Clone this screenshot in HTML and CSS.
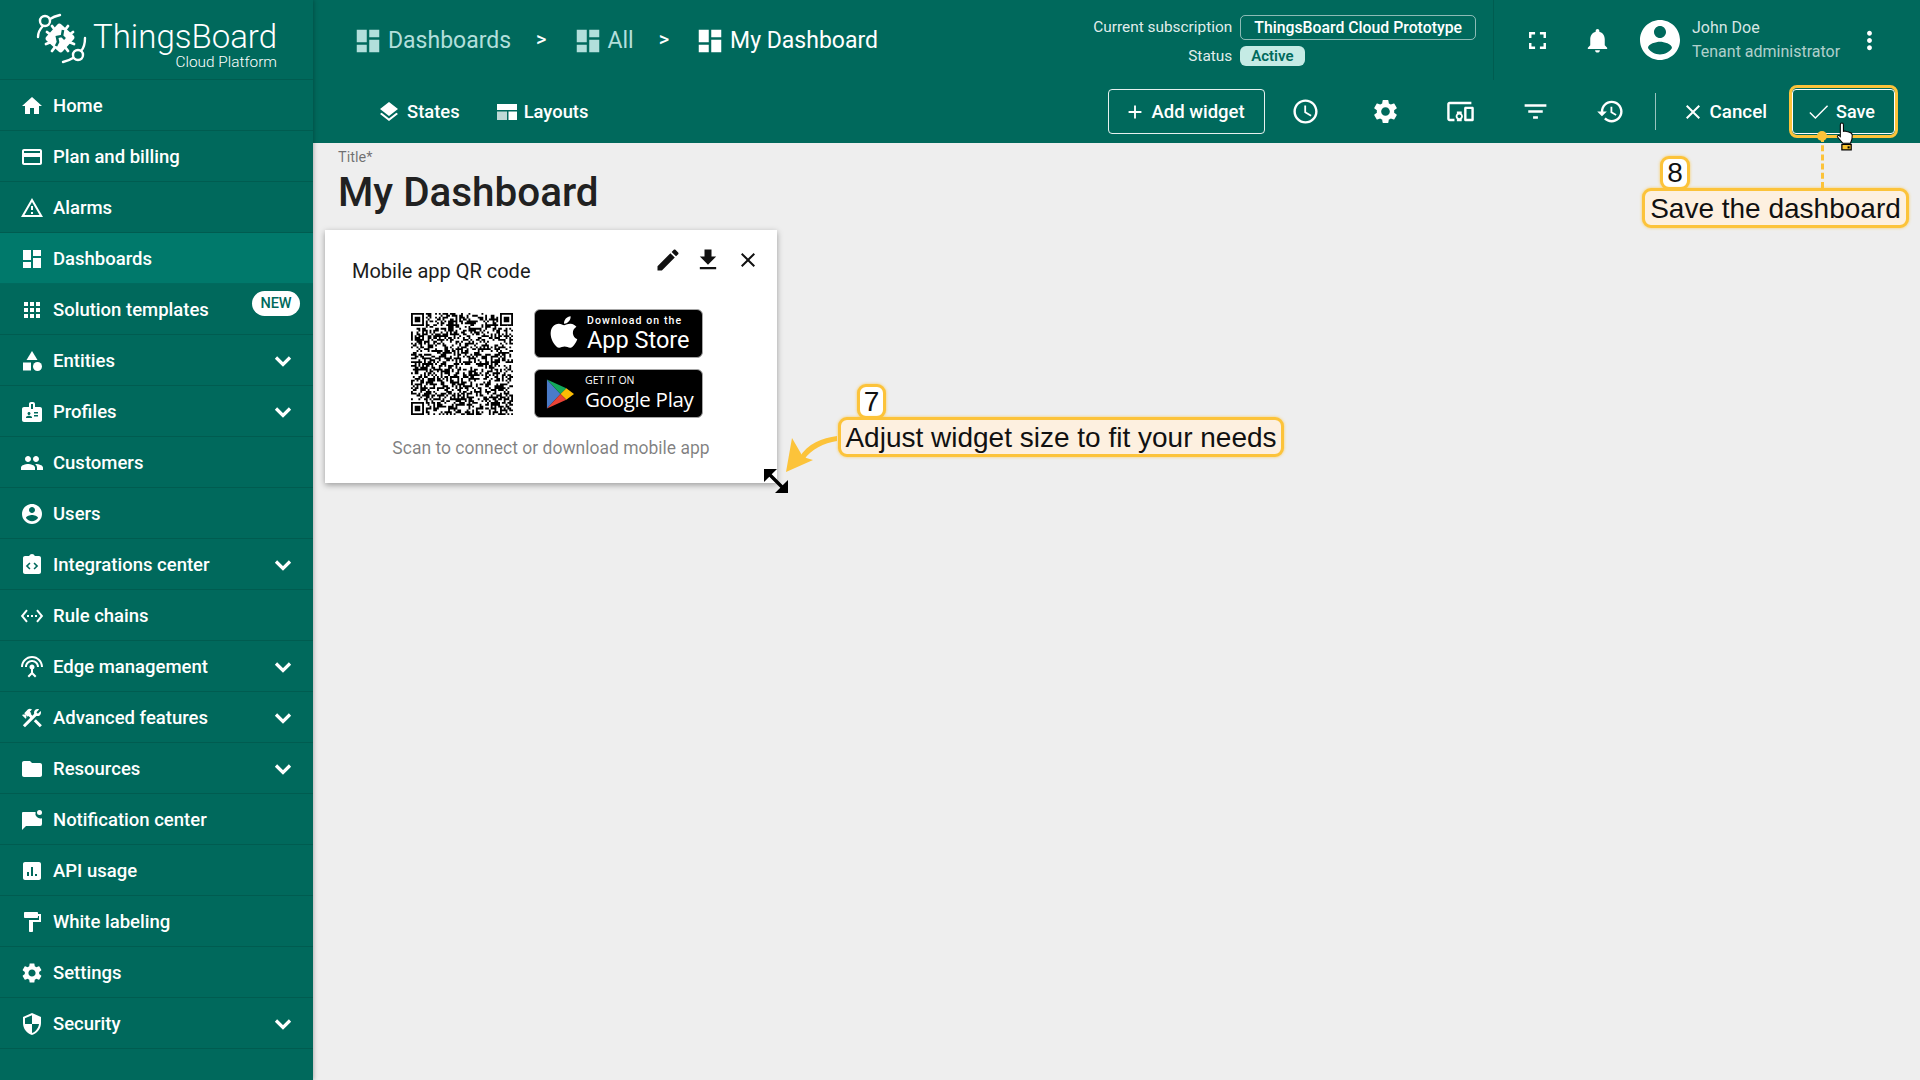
FILE: index.html

```html
<!DOCTYPE html>
<html lang="en">
<head>
  <meta charset="UTF-8">
  <title>ThingsBoard | My Dashboard</title>
  <link rel="stylesheet" href="styles.css">
</head>
<body>
  <svg class="defs" width="0" height="0">
    <symbol id="i-home" viewBox="0 0 24 24"><path d="M10 20v-6h4v6h5v-8h3L12 3 2 12h3v8z"/></symbol>
    <symbol id="i-card" viewBox="0 0 24 24"><path d="M20 4H4c-1.11 0-1.99.89-1.99 2L2 18c0 1.11.89 2 2 2h16c1.11 0 2-.89 2-2V6c0-1.11-.89-2-2-2zm0 14H4v-6h16v6zm0-10H4V6h16v2z"/></symbol>
    <symbol id="i-alarm" viewBox="0 0 24 24"><path d="M12 5.99L19.53 19H4.47L12 5.99M12 2L1 21h22L12 2zm1 14h-2v2h2v-2zm0-6h-2v4h2v-4z"/></symbol>
    <symbol id="i-dash" viewBox="0 0 24 24"><path d="M3 13h8V3H3v10zm0 8h8v-6H3v6zm10 0h8V11h-8v10zm0-18v6h8V3h-8z"/></symbol>
    <symbol id="i-apps" viewBox="0 0 24 24"><path d="M4 8h4V4H4v4zm6 12h4v-4h-4v4zm-6 0h4v-4H4v4zm0-6h4v-4H4v4zm6 0h4v-4h-4v4zm6-10v4h4V4h-4zm-6 4h4V4h-4v4zm6 6h4v-4h-4v4zm0 6h4v-4h-4v4z"/></symbol>
    <symbol id="i-entities" viewBox="0 0 24 24"><path d="M12 2l-5.5 9h11z"/><circle cx="17.5" cy="17.5" r="4.5"/><path d="M3 13.5h8v8H3z"/></symbol>
    <symbol id="i-profiles" viewBox="0 0 24 24"><path d="M20 7h-5V4c0-1.1-.9-2-2-2h-2c-1.1 0-2 .9-2 2v3H4c-1.1 0-2 .9-2 2v11c0 1.1.9 2 2 2h16c1.1 0 2-.9 2-2V9c0-1.1-.9-2-2-2zM9 12c.83 0 1.5.67 1.5 1.5S9.83 15 9 15s-1.5-.67-1.5-1.5S8.17 12 9 12zm3 6H6v-.75c0-1 2-1.5 3-1.5s3 .5 3 1.5V18zm1-9h-2V4h2v5zm5 7.5h-4V15h4v1.5zm0-3h-4V12h4v1.5z"/></symbol>
    <symbol id="i-people" viewBox="0 0 24 24"><path d="M16 11c1.66 0 2.99-1.34 2.99-3S17.66 5 16 5c-1.66 0-3 1.34-3 3s1.34 3 3 3zm-8 0c1.66 0 2.99-1.34 2.99-3S9.66 5 8 5C6.34 5 5 6.34 5 8s1.34 3 3 3zm0 2c-2.33 0-7 1.17-7 3.5V19h14v-2.5c0-2.33-4.67-3.5-7-3.5zm8 0c-.29 0-.62.02-.97.05 1.16.84 1.97 1.97 1.97 3.45V19h6v-2.5c0-2.33-4.67-3.5-7-3.5z"/></symbol>
    <symbol id="i-account" viewBox="0 0 24 24"><path d="M12 2C6.48 2 2 6.48 2 12s4.48 10 10 10 10-4.48 10-10S17.52 2 12 2zm0 3c1.66 0 3 1.34 3 3s-1.34 3-3 3-3-1.34-3-3 1.34-3 3-3zm0 14.2c-2.5 0-4.71-1.28-6-3.22.03-1.99 4-3.08 6-3.08 1.99 0 5.97 1.09 6 3.08-1.29 1.94-3.5 3.22-6 3.22z"/></symbol>
    <symbol id="i-integr" viewBox="0 0 24 24"><path fill-rule="evenodd" d="M19 3h-4.18C14.4 1.84 13.3 1 12 1s-2.4.84-2.82 2H5c-1.1 0-2 .9-2 2v14c0 1.1.9 2 2 2h14c1.100 0 2-.9 2-2V5c0-1.100-.9-2-2-2zM10.500 15.500l-1.100 1.100L5.800 13l3.600-3.600 1.100 1.100L8 13zm3 0l1.100 1.100L18.200 13l-3.600-3.600-1.100 1.100L16 13z"/></symbol>
    <symbol id="i-rule" viewBox="0 0 24 24"><path d="M7.77 6.76L6.23 5.48.82 12l5.41 6.52 1.54-1.28L3.42 12l4.35-5.24zM7 13h2v-2H7v2zm10-2h-2v2h2v-2zm-6 2h2v-2h-2v2zm6.77-7.52l-1.54 1.28L20.58 12l-4.35 5.24 1.54 1.28L23.18 12l-5.41-6.52z"/></symbol>
    <symbol id="i-edge" viewBox="0 0 24 24"><path d="M12 5c-3.87 0-7 3.13-7 7h2c0-2.76 2.24-5 5-5s5 2.24 5 5h2c0-3.87-3.13-7-7-7zm1 9.29c.88-.39 1.5-1.26 1.5-2.29 0-1.38-1.12-2.5-2.5-2.5S9.5 10.62 9.5 12c0 1.02.62 1.9 1.5 2.29v3.3L7.59 21 9 22.41l3-3 3 3L16.41 21 13 17.59v-3.3zM12 1C5.93 1 1 5.93 1 12h2c0-4.97 4.03-9 9-9s9 4.03 9 9h2c0-6.07-4.93-11-11-11z"/></symbol>
    <symbol id="i-tools" viewBox="0 0 24 24"><path d="M13.78 15.3L19.78 21.3L21.89 19.14L15.89 13.14L13.78 15.3M17.5 10.1C17.11 10.1 16.69 10.05 16.36 9.91L4.97 21.25L2.86 19.14L10.27 11.74L8.5 9.96L7.78 10.66L6.33 9.25V12.11L5.63 12.81L2.11 9.25L2.81 8.55H5.62L4.22 7.14L7.78 3.58C8.95 2.41 10.83 2.41 12 3.58L9.89 5.74L11.3 7.14L10.59 7.85L12.38 9.63L14.2 7.75C14.06 7.42 14 7 14 6.63C14 4.66 15.56 3.11 17.5 3.11C18.09 3.11 18.61 3.25 19.08 3.53L16.41 6.2L17.91 7.7L20.58 5.03C20.86 5.5 21 6 21 6.63C21 8.55 19.45 10.1 17.5 10.1Z"/></symbol>
    <symbol id="i-folder" viewBox="0 0 24 24"><path d="M10 4H4c-1.1 0-1.99.9-1.99 2L2 18c0 1.1.9 2 2 2h16c1.1 0 2-.9 2-2V8c0-1.1-.9-2-2-2h-8l-2-2z"/></symbol>
    <symbol id="i-notif" viewBox="0 0 24 24"><path d="M2 5a1 1 0 0 1 1-1h12.6a5 5 0 0 0 6.4 6.2V16a2 2 0 0 1-2 2H6l-4 4z"/><circle cx="19.5" cy="4.5" r="2.5"/></symbol>
    <symbol id="i-api" viewBox="0 0 24 24"><path d="M19 3H5c-1.1 0-2 .9-2 2v14c0 1.1.9 2 2 2h14c1.1 0 2-.9 2-2V5c0-1.1-.9-2-2-2zM9 17H7v-4h2v4zm4 0h-2V8h2v9zm4 0h-2v-2h2v2z"/></symbol>
    <symbol id="i-paint" viewBox="0 0 24 24"><path d="M18 4V3c0-.55-.45-1-1-1H5c-.55 0-1 .45-1 1v4c0 .55.45 1 1 1h12c.55 0 1-.45 1-1V6h1v4H9v11c0 .55.45 1 1 1h2c.55 0 1-.45 1-1v-9h8V4h-3z"/></symbol>
    <symbol id="i-gear" viewBox="0 0 24 24"><path d="M19.14 12.94c.04-.3.06-.61.06-.94 0-.32-.02-.64-.07-.94l2.03-1.58c.18-.14.23-.41.12-.61l-1.92-3.32c-.12-.22-.37-.29-.59-.22l-2.39.96c-.5-.38-1.03-.7-1.62-.94l-.36-2.54c-.04-.24-.24-.41-.48-.41h-3.84c-.24 0-.43.17-.47.41l-.36 2.54c-.59.24-1.13.57-1.62.94l-2.39-.96c-.22-.08-.47 0-.59.22L2.74 8.87c-.12.21-.08.47.12.61l2.03 1.58c-.05.3-.09.63-.09.94s.02.64.07.94l-2.03 1.58c-.18.14-.23.41-.12.61l1.92 3.32c.12.22.37.29.59.22l2.39-.96c.5.38 1.03.7 1.62.94l.36 2.54c.05.24.24.41.48.41h3.84c.24 0 .44-.17.47-.41l.36-2.54c.59-.24 1.13-.56 1.62-.94l2.39.96c.22.08.47 0 .59-.22l1.92-3.32c.12-.22.07-.47-.12-.61l-2.01-1.58zM12 15.6c-1.98 0-3.6-1.62-3.6-3.6s1.62-3.6 3.6-3.6 3.6 1.62 3.6 3.6-1.62 3.6-3.6 3.6z"/></symbol>
    <symbol id="i-shield" viewBox="0 0 24 24"><path d="M12 1L3 5v6c0 5.55 3.84 10.74 9 12 5.16-1.26 9-6.45 9-12V5l-9-4zm0 10.99h7c-.53 4.12-3.28 7.79-7 8.94V12H5V6.3l7-3.11v8.8z"/></symbol>
    <symbol id="i-more" viewBox="0 0 24 24"><path d="M12 8c1.1 0 2-.9 2-2s-.9-2-2-2-2 .9-2 2 .9 2 2 2zm0 2c-1.1 0-2 .9-2 2s.9 2 2 2 2-.9 2-2-.9-2-2-2zm0 6c-1.1 0-2 .9-2 2s.9 2 2 2 2-.9 2-2-.9-2-2-2z"/></symbol>
    <symbol id="i-close" viewBox="0 0 24 24"><path d="M19 6.41L17.59 5 12 10.59 6.41 5 5 6.41 10.59 12 5 17.59 6.41 19 12 13.41 17.59 19 19 17.59 13.41 12z"/></symbol>
    <symbol id="i-chevron" viewBox="0 0 24 24"><path d="M5 8.5l7 7 7-7" fill="none" stroke="currentColor" stroke-width="3.2"/></symbol>
  </svg>

  <div class="app">
    <nav class="sidebar">
      <div class="brand">
        <svg class="brand-logo" viewBox="0 0 60 60">
          <g fill="none" stroke="#fff" stroke-width="2.4" stroke-linecap="round">
            <circle cx="15" cy="13" r="5"/>
            <circle cx="48" cy="47" r="5"/>
            <path d="M20 11c3-2 6-3 10-4M13 18c-3 3-5 7-5 11M43 50c-3 2-6 3-10 4M51 43c3-3 4-8 4-13"/>
            <path d="M22 18l3 4M38 18l-3 4M17 24l4 3M43 24l-4 3M16 36l5-2M44 36l-5-2M22 43l3-4M38 43l-3-4" stroke-width="2.8"/>
          </g>
          <rect x="19" y="19" width="22" height="22" rx="3" fill="#fff" transform="rotate(42 30 30)"/>
          <path d="M33 22l-1 6-5 1 1 5-2 4M32 28l3 3" fill="none" stroke="#00695c" stroke-width="2.6"/>
        </svg>
        <div class="brand-text">
          <span class="brand-name">ThingsBoard</span>
          <span class="brand-sub">Cloud Platform</span>
        </div>
      </div>
      <a class="nav-item"><svg class="nav-icon"><use href="#i-home"/></svg><span>Home</span></a>
      <a class="nav-item"><svg class="nav-icon"><use href="#i-card"/></svg><span>Plan and billing</span></a>
      <a class="nav-item"><svg class="nav-icon"><use href="#i-alarm"/></svg><span>Alarms</span></a>
      <a class="nav-item active"><svg class="nav-icon"><use href="#i-dash"/></svg><span>Dashboards</span></a>
      <a class="nav-item"><svg class="nav-icon"><use href="#i-apps"/></svg><span>Solution templates</span><b class="new-badge">NEW</b></a>
      <a class="nav-item"><svg class="nav-icon"><use href="#i-entities"/></svg><span>Entities</span><svg class="nav-arrow"><use href="#i-chevron"/></svg></a>
      <a class="nav-item"><svg class="nav-icon"><use href="#i-profiles"/></svg><span>Profiles</span><svg class="nav-arrow"><use href="#i-chevron"/></svg></a>
      <a class="nav-item"><svg class="nav-icon"><use href="#i-people"/></svg><span>Customers</span></a>
      <a class="nav-item"><svg class="nav-icon"><use href="#i-account"/></svg><span>Users</span></a>
      <a class="nav-item"><svg class="nav-icon"><use href="#i-integr"/></svg><span>Integrations center</span><svg class="nav-arrow"><use href="#i-chevron"/></svg></a>
      <a class="nav-item"><svg class="nav-icon"><use href="#i-rule"/></svg><span>Rule chains</span></a>
      <a class="nav-item"><svg class="nav-icon"><use href="#i-edge"/></svg><span>Edge management</span><svg class="nav-arrow"><use href="#i-chevron"/></svg></a>
      <a class="nav-item"><svg class="nav-icon"><use href="#i-tools"/></svg><span>Advanced features</span><svg class="nav-arrow"><use href="#i-chevron"/></svg></a>
      <a class="nav-item"><svg class="nav-icon"><use href="#i-folder"/></svg><span>Resources</span><svg class="nav-arrow"><use href="#i-chevron"/></svg></a>
      <a class="nav-item"><svg class="nav-icon"><use href="#i-notif"/></svg><span>Notification center</span></a>
      <a class="nav-item"><svg class="nav-icon"><use href="#i-api"/></svg><span>API usage</span></a>
      <a class="nav-item"><svg class="nav-icon"><use href="#i-paint"/></svg><span>White labeling</span></a>
      <a class="nav-item"><svg class="nav-icon"><use href="#i-gear"/></svg><span>Settings</span></a>
      <a class="nav-item"><svg class="nav-icon"><use href="#i-shield"/></svg><span>Security</span><svg class="nav-arrow"><use href="#i-chevron"/></svg></a>
    </nav>

    <main class="main">
      <header class="topbar">
        <div class="top-row">
          <div class="crumbs">
            <svg class="crumb-icon"><use href="#i-dash"/></svg><span class="crumb">Dashboards</span>
            <span class="crumb-sep">&gt;</span>
            <svg class="crumb-icon"><use href="#i-dash"/></svg><span class="crumb">All</span>
            <span class="crumb-sep">&gt;</span>
            <svg class="crumb-icon current"><use href="#i-dash"/></svg><span class="crumb current">My Dashboard</span>
          </div>
          <div class="subscription">
            <span class="sub-label">Current subscription</span><span class="sub-plan">ThingsBoard Cloud Prototype</span>
            <span class="sub-label">Status</span><span class="sub-status">Active</span>
          </div>
          <div class="user-area">
            <svg class="top-icon fullscreen" viewBox="0 0 24 24"><path d="M7 14H5v5h5v-2H7v-3zm-2-4h2V7h3V5H5v5zm12 7h-3v2h5v-5h-2v3zM14 5v2h3v3h2V5h-5z"/></svg>
            <svg class="top-icon bell" viewBox="0 0 24 24"><path d="M12 22c1.1 0 2-.9 2-2h-4c0 1.1.89 2 2 2zm6-6v-5c0-3.07-1.64-5.64-4.5-6.32V4c0-.83-.67-1.5-1.5-1.5s-1.5.67-1.5 1.5v.68C7.63 5.36 6 7.92 6 11v5l-2 2v1h16v-1l-2-2z"/></svg>
            <svg class="avatar"><use href="#i-account"/></svg>
            <div class="user-text">
              <span class="user-name">John Doe</span>
              <span class="user-role">Tenant administrator</span>
            </div>
            <svg class="top-icon more"><use href="#i-more"/></svg>
          </div>
        </div>
        <div class="action-row">
          <a class="tab-btn states">
            <svg viewBox="0 0 24 24"><path d="M11.99 18.54l-7.37-5.73L3 14.07l9 7 9-7-1.63-1.27-7.38 5.74zM12 16l7.36-5.73L21 9l-9-7-9 7 1.63 1.27L12 16z"/></svg>States
          </a>
          <a class="tab-btn layouts">
            <svg viewBox="0 0 24 24"><path d="M2 4h20v6H2z"/><path d="M2 11.5h10V20H2z" opacity=".75"/><path d="M13.5 11.5H22V20h-8.5z"/></svg>Layouts
          </a>
          <a class="add-btn">
            <svg viewBox="0 0 24 24"><path d="M19 13h-6v6h-2v-6H5v-2h6V5h2v6h6v2z"/></svg>Add widget
          </a>
          <svg class="tool-icon first" viewBox="0 0 24 24"><path d="M11.99 2C6.47 2 2 6.48 2 12s4.47 10 9.99 10C17.52 22 22 17.52 22 12S17.52 2 11.99 2zM12 20c-4.42 0-8-3.58-8-8s3.58-8 8-8 8 3.58 8 8-3.58 8-8 8zm.5-13H11v6l5.25 3.15.75-1.23-4.5-2.67z"/></svg>
          <svg class="tool-icon second"><use href="#i-gear"/></svg>
          <svg class="tool-icon" viewBox="0 0 24 24"><path d="M3 6h18V4H3c-1.1 0-2 .9-2 2v12c0 1.1.9 2 2 2h4v-2H3V6zm10 6H9v1.78c-.61.55-1 1.33-1 2.22s.39 1.67 1 2.22V20h4v-1.78c.61-.55 1-1.34 1-2.22s-.39-1.67-1-2.22V12zm-2 5.5c-.83 0-1.5-.67-1.5-1.5s.67-1.5 1.5-1.5 1.5.67 1.5 1.5-.67 1.5-1.5 1.5zM22 8h-6c-.5 0-1 .5-1 1v10c0 .5.5 1 1 1h6c.5 0 1-.5 1-1V9c0-.5-.5-1-1-1zm-1 10h-4v-8h4v8z"/></svg>
          <svg class="tool-icon" viewBox="0 0 24 24"><path d="M10 18h4v-2h-4v2zM3 6v2h18V6H3zm3 7h12v-2H6v2z"/></svg>
          <svg class="tool-icon" viewBox="0 0 24 24"><path d="M13 3c-4.97 0-9 4.03-9 9H1l3.89 3.89.07.14L9 12H6c0-3.87 3.13-7 7-7s7 3.13 7 7-3.13 7-7 7c-1.93 0-3.68-.79-4.94-2.06l-1.42 1.42C8.27 19.99 10.51 21 13 21c4.97 0 9-4.03 9-9s-4.03-9-9-9zm-1 5v5l4.28 2.54.72-1.21-3.5-2.08V8H12z"/></svg>
          <span class="tool-divider"></span>
          <a class="text-btn cancel"><svg><use href="#i-close"/></svg>Cancel</a>
          <a class="text-btn save">
            <svg viewBox="0 0 24 24"><path d="M9 17.2L4.2 12.4l-1 1L9 19.2 21.2 7l-1-1z"/></svg>Save
          </a>
        </div>
      </header>

      <section class="content">
        <div class="title-field">
          <label class="title-label">Title*</label>
          <h1 class="title-value">My Dashboard</h1>
        </div>
        <div class="canvas">
          <article class="widget">
            <div class="widget-head">
              <span class="widget-title">Mobile app QR code</span>
              <span class="widget-actions">
                <svg viewBox="0 0 24 24"><path d="M3 17.25V21h3.75L17.81 9.94l-3.75-3.75L3 17.25zM20.71 7.04c.39-.39.39-1.02 0-1.41l-2.34-2.34c-.39-.39-1.02-.39-1.41 0l-1.83 1.83 3.75 3.75 1.83-1.83z"/></svg>
                <svg viewBox="0 0 24 24"><path d="M19 9h-4V3H9v6H5l7 7 7-7zM5 18v2h14v-2H5z"/></svg>
                <svg class="widget-close"><use href="#i-close"/></svg>
              </span>
            </div>
            <div class="qr-row">
              <svg id="qr" class="qr" viewBox="0 0 55 55"></svg>
              <div class="stores">
                <div class="store-badge">
                  <svg class="apple" viewBox="0 0 24 24"><path d="M17.05 20.28c-.98.95-2.05.8-3.08.35-1.09-.46-2.09-.48-3.24 0-1.44.62-2.2.44-3.06-.35C2.79 15.25 3.51 7.59 9.05 7.31c1.35.07 2.29.74 3.08.8 1.18-.24 2.31-.93 3.57-.84 1.51.12 2.65.72 3.4 1.8-3.12 1.87-2.38 5.98.48 7.13-.57 1.5-1.31 2.99-2.54 4.09zM12.03 7.25c-.15-2.23 1.66-4.07 3.74-4.25.29 2.58-2.34 4.5-3.74 4.25z"/></svg>
                  <div class="store-text">
                    <span class="store-small apple-small">Download on the</span>
                    <span class="store-big apple-big">App Store</span>
                  </div>
                </div>
                <div class="store-badge">
                  <svg class="play" viewBox="0 0 30 32">
                    <path d="M1 1v30l14-15z" fill="#4a7bc8"/>
                    <path d="M1 1l14 15 6-6z" fill="#12a85b"/>
                    <path d="M21 10l-6 6 6 6 8-6z" fill="#fbbc04"/>
                    <path d="M1 31l14-15 6 6z" fill="#ea4335"/>
                  </svg>
                  <div class="store-text">
                    <span class="store-small">GET IT ON</span>
                    <span class="store-big google">Google Play</span>
                  </div>
                </div>
              </div>
            </div>
            <p class="widget-caption">Scan to connect or download mobile app</p>
          </article>
        </div>
      </section>
    </main>
  </div>

  <!-- tour overlay -->
  <div class="save-ring"></div>
  <div class="save-line"></div>
  <div class="save-dot"></div>
  <svg class="hand" viewBox="0 0 18 28">
    <path d="M5.500 1c1 0 1.500.7 1.500 1.600V9l1.500-.3 1.400.4 1.400.3 1.500.5c1.500.4 2.700 1.200 2.700 2.800l-.3 4-1.400 3.800H6.500L1.300 14.500c-.7-1.100.8-2.200 1.900-1.100l.8.700V2.600C4 1.700 4.600 1 5.500 1z" fill="#fff" stroke="#000" stroke-width="1"/>
    <path d="M5.500 21.500h9v5.500h-9z" fill="#f7c02e" stroke="#000" stroke-width="1.200"/>
    <path d="M11 23.500h2v2h-2z" fill="#000"/>
  </svg>
  <div class="step step-8">8</div>
  <div class="tip tip-8">Save the dashboard</div>

  <svg class="curve" viewBox="0 0 60 50">
    <path d="M51 3C36 5 22 10 13 25l5 2C25 16 38 10 51 8z" fill="#fcc33a"/>
    <path d="M6 5L0 39l27-12-10-3z" fill="#fcc33a"/>
  </svg>
  <svg class="resize" viewBox="0 0 24 24">
    <path d="M0 0H13L7.700 5.300 18.700 16.300 24 11V24H11L16.300 18.700 5.300 7.700 0 13Z" fill="#000"/>
  </svg>
  <div class="step step-7">7</div>
  <div class="tip tip-7">Adjust widget size to fit your needs</div>

  <script src="qr.js"></script>
</body>
</html>
```

FILE: styles.css

```css
* {
  box-sizing: border-box;
}
html, body {
  margin: 0;
  height: 100%;
  overflow: hidden;
}
body {
  font-family: Roboto, "Liberation Sans", sans-serif;
  background-color: #eeeeee;
  color: #212121;
  position: relative;
}
svg {
  fill: currentColor;
  display: block;
  flex: none;
}
.defs {
  position: absolute;
}
.app {
  display: flex;
  height: 1080px;
}

/* sidebar */
.sidebar {
  width: 313px;
  flex: none;
  background-color: #00695c;
  color: #fff;
  box-shadow: 1px 0 4px rgba(0, 0, 0, 0.25);
  z-index: 2;
}
.brand {
  height: 80px;
  display: flex;
  align-items: flex-start;
  padding: 8px 0 0 30px;
  border-bottom: 1px solid rgba(0, 0, 0, 0.12);
}
.brand-logo {
  width: 60px;
  height: 60px;
}
.brand-text {
  display: flex;
  flex-direction: column;
  align-items: flex-end;
  margin-left: 3px;
}
.brand-name {
  font-size: 33px;
  font-weight: 300;
  line-height: 38px;
  margin-top: 10px;
}
.brand-sub {
  font-size: 15.400px;
  line-height: 16px;
  font-weight: 300;
  margin-top: -2px;
}
.nav-item {
  height: 51px;
  display: flex;
  align-items: center;
  padding: 1px 0 0 20px;
  font-size: 18.500px;
  font-weight: 500;
  border-bottom: 1px solid rgba(0, 0, 0, 0.12);
  position: relative;
}
.nav-item.active {
  background-color: #00796b;
}
.nav-icon {
  width: 24px;
  height: 24px;
  margin-right: 9px;
}
.nav-arrow {
  width: 24px;
  height: 24px;
  margin-left: auto;
  margin-right: 18px;
}
.new-badge {
  position: absolute;
  left: 252px;
  top: 7px;
  width: 48px;
  height: 25px;
  border-radius: 13px;
  background-color: #fff;
  color: #00695c;
  font-size: 14.500px;
  font-weight: 500;
  line-height: 25px;
  text-align: center;
}

/* top toolbar */
.main {
  flex: 1;
  min-width: 0;
}
.topbar {
  height: 143px;
  background-color: #00695c;
  color: #fff;
}
.top-row {
  height: 80px;
  display: flex;
  align-items: center;
  padding-left: 40px;
}
.crumbs {
  display: flex;
  align-items: center;
  flex: 1;
  padding-top: 1px;
}
.crumb-icon {
  width: 30px;
  height: 30px;
  color: #b2dfdb;
  margin-right: 5px;
}
.crumb-icon.current {
  color: #fff;
}
.crumb {
  font-size: 23px;
  color: #b2dfdb;
}
.crumb.current {
  color: #fff;
}
.crumb-sep {
  font-size: 20px;
  font-weight: 500;
  margin: 0 26px 4px 25px;
}
.subscription {
  display: grid;
  grid-template-columns: auto auto;
  justify-content: end;
  justify-items: end;
  align-items: center;
  column-gap: 8px;
  row-gap: 6px;
  font-size: 15.400px;
  padding-right: 17px;
  height: 80px;
  align-content: center;
  border-right: 1px solid rgba(0, 0, 0, 0.12);
}
.sub-label {
  color: rgba(255, 255, 255, 0.9);
}
.sub-plan {
  justify-self: start;
  height: 25px;
  line-height: 23px;
  padding: 0 13px;
  border: 1px solid rgba(255, 255, 255, 0.55);
  border-radius: 5px;
  font-size: 15.800px;
  font-weight: 500;
}
.sub-status {
  justify-self: start;
  height: 20px;
  line-height: 20px;
  padding: 0 11px;
  border-radius: 6px;
  background-color: #c5ebe5;
  color: #00695c;
  font-size: 15px;
  font-weight: 600;
}
.user-area {
  display: flex;
  align-items: center;
  width: 426px;
  height: 80px;
}
.top-icon {
  width: 29px;
  height: 29px;
}
.fullscreen {
  margin-left: 29px;
}
.bell {
  margin-left: 31px;
}
.avatar {
  width: 48px;
  height: 48px;
  margin-left: 24px;
}
.user-text {
  display: flex;
  flex-direction: column;
  margin-left: 8px;
  width: 163px;
  font-size: 16px;
  line-height: 24px;
}
.user-name {
  color: rgba(255, 255, 255, 0.85);
}
.user-role {
  color: rgba(255, 255, 255, 0.7);
}
.more {
  margin-left: 0;
}
.action-row {
  height: 63px;
  display: flex;
  align-items: center;
  padding-left: 64px;
  padding-right: 25px;
  font-size: 18.400px;
  font-weight: 500;
}
.tab-btn {
  display: flex;
  align-items: center;
}
.tab-btn svg {
  width: 24px;
  height: 24px;
  margin-right: 6px;
}
.tab-btn.layouts {
  margin-left: 35px;
}
.tab-btn.layouts svg {
  margin-right: 5px;
}
.add-btn {
  display: flex;
  align-items: center;
  height: 45px;
  width: 157px;
  margin-left: auto;
  padding-left: 15px;
  border: 1px solid rgba(255, 255, 255, 0.9);
  border-radius: 4px;
  font-size: 18.500px;
}
.add-btn svg {
  width: 22px;
  height: 22px;
  margin-right: 6px;
}
.tool-icon {
  width: 29px;
  height: 29px;
  margin-left: 46px;
}
.tool-icon.first {
  margin-left: 26px;
}
.tool-icon.second {
  margin-left: 51px;
}
.tool-divider {
  width: 1px;
  height: 37px;
  background-color: rgba(255, 255, 255, 0.6);
  margin-left: 30px;
}
.text-btn {
  display: flex;
  align-items: center;
  font-size: 18px;
}
.cancel {
  font-size: 18.800px;
  margin-left: 25px;
}
.cancel svg {
  width: 24px;
  height: 24px;
  margin-right: 5px;
}
.save {
  width: 103px;
  height: 45px;
  margin-left: 25px;
  padding-left: 13px;
  border: 1px solid #fff;
  border-radius: 4px;
}
.save svg {
  width: 25px;
  height: 25px;
  margin-right: 5px;
}

/* dashboard */
.content {
  height: 937px;
  padding: 6px 0 0 12px;
}
.title-field {
  padding-left: 13px;
}
.title-label {
  display: block;
  font-size: 14.500px;
  line-height: 18px;
  color: rgba(0, 0, 0, 0.54);
}
.title-value {
  margin: 2px 0 0;
  font-size: 40.400px;
  line-height: 48px;
  font-weight: 500;
  color: #212121;
}
.canvas {
  margin-top: 13px;
}
.widget {
  width: 452px;
  height: 253px;
  background-color: #fff;
  padding: 10px 9px 0;
  box-shadow: 0 2px 6px rgba(0, 0, 0, 0.35);
}
.widget-head {
  display: flex;
  justify-content: space-between;
  height: 59px;
  padding-left: 18px;
}
.widget-title {
  font-size: 20px;
  line-height: 24px;
  margin-top: 19px;
  color: #1c1c1c;
}
.widget-actions {
  display: flex;
  height: 40px;
  align-items: center;
  color: #111;
}
.widget-actions svg {
  width: 28px;
  height: 28px;
  margin: 0 6px;
}
.widget-actions .widget-close {
  width: 24px;
  height: 24px;
  margin: 0 8px;
}
.qr-row {
  display: flex;
  align-items: center;
  margin-left: 77px;
  margin-top: 10px;
  gap: 21px;
}
.qr {
  width: 102px;
  height: 102px;
  fill: #000;
}
.stores {
  display: flex;
  flex-direction: column;
  gap: 11px;
}
.store-badge {
  width: 169px;
  height: 49px;
  background-color: #000;
  border: 1px solid #a6a6a6;
  border-radius: 6px;
  color: #fff;
  display: flex;
  align-items: center;
}
.apple {
  width: 42px;
  height: 42px;
  margin: -4px 2px 0 8px;
}
.play {
  width: 29px;
  height: 32px;
  margin: 0 10px 0 11px;
}
.store-text {
  display: flex;
  flex-direction: column;
}
.store-small {
  font-family: "Open Sans", sans-serif;
  font-size: 10.500px;
  line-height: 12px;
  font-weight: 500;
}
.apple-small {
  font-family: Roboto, sans-serif;
  letter-spacing: 1.100px;
  line-height: 13px;
}
.store-big {
  font-family: "Open Sans", sans-serif;
  font-size: 20.500px;
  line-height: 27px;
  letter-spacing: -0.3px;
}
.store-big.apple-big {
  font-family: Roboto, sans-serif;
  font-size: 23.500px;
  letter-spacing: 0;
}
.widget-caption {
  margin: 18px 0 0;
  font-size: 17.500px;
  line-height: 24px;
  text-align: center;
  color: rgba(0, 0, 0, 0.5);
}

/* tour overlay */
.save-ring {
  position: absolute;
  left: 1789px;
  top: 85px;
  width: 109px;
  height: 53px;
  border: 3px solid #fcc33a;
  border-radius: 8px;
}
.save-line {
  position: absolute;
  left: 1821px;
  top: 136px;
  height: 52px;
  border-left: 3px dashed #fcc33a;
}
.save-dot {
  position: absolute;
  left: 1817px;
  top: 131px;
  width: 10px;
  height: 10px;
  border-radius: 50%;
  background-color: #fcc33a;
}
.hand {
  position: absolute;
  left: 1836px;
  top: 122px;
  width: 19px;
  height: 29px;
}
.step, .tip {
  position: absolute;
  font-family: "Liberation Sans", Arial, sans-serif;
  color: #111;
  border: 3px solid #fcc33a;
  border-radius: 9px;
  box-shadow: 0 0 3px rgba(252, 195, 58, 0.8);
  text-align: center;
}
.step {
  background-color: #fff;
  font-size: 28px;
}
.tip {
  background-color: #fdf0e0;
  font-size: 28px;
  white-space: nowrap;
}
.step-8 {
  left: 1660px;
  top: 156px;
  width: 30px;
  height: 34px;
  line-height: 28px;
}
.tip-8 {
  left: 1642px;
  top: 188px;
  width: 267px;
  height: 40px;
  line-height: 36px;
}
.step-7 {
  left: 857px;
  top: 384px;
  width: 29px;
  height: 35px;
  line-height: 29px;
}
.tip-7 {
  left: 838px;
  top: 417px;
  width: 446px;
  height: 40px;
  line-height: 36px;
}
.curve {
  position: absolute;
  left: 786px;
  top: 433px;
  width: 60px;
  height: 50px;
}
.resize {
  position: absolute;
  left: 764px;
  top: 469px;
  width: 24px;
  height: 24px;
}
```

FILE: qr.js

```js
// draws the QR code modules, with the three finder squares fixed
var size = 55;
var seed = 73;

function finder(x, y) {
  var dx = x < 8 ? x : x >= size - 8 ? x - (size - 7) : -9;
  var dy = y < 8 ? y : y >= size - 8 ? y - (size - 7) : -9;
  if (x >= size - 8 && y >= size - 8) return -1;
  if (dx === -9 || dy === -9) return -1;
  if (dx < 0 || dy < 0 || dx > 6 || dy > 6) return 0;
  if (dx === 0 || dy === 0 || dx === 6 || dy === 6) return 1;
  return dx >= 2 && dx <= 4 && dy >= 2 && dy <= 4 ? 1 : 0;
}

function next() {
  seed = (seed * 1103515245 + 12345) % 2147483648;
  return seed / 2147483648 > 0.5;
}

var d = "";
for (var y = 0; y < size; y++) {
  for (var x = 0; x < size; x++) {
    var f = finder(x, y);
    var dark = f === -1 ? next() : f === 1;
    if (dark) d += "M" + x + " " + y + "h1v1h-1z";
  }
}
var path = document.createElementNS("http://www.w3.org/2000/svg", "path");
path.setAttribute("d", d);
document.getElementById("qr").appendChild(path);
```
